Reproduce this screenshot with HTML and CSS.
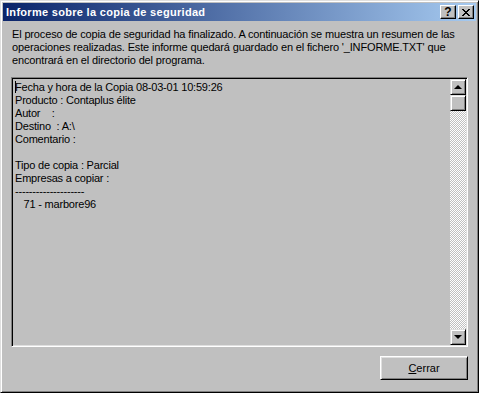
FILE: index.html
```html
<!DOCTYPE html>
<html lang="es">
	<head>
		<meta charset="UTF-8" />
		<meta name="viewport" content="width=device-width, initial-scale=1.0" />
		<title>Informe sobre la copia de seguridad</title>
		<link rel="stylesheet" href="styles.css">
	</head>
	<body>
		<div class="window">
			<div class="titlebar">
				<span class="title">Informe sobre la copia de seguridad</span>
				<div class="title-buttons">
					<span class="tbtn help">?</span>
					<span class="tbtn close">
						<svg width="8" height="7" viewBox="0 0 8 7">
							<path d="M0 0h2v1h-2zM6 0h2v1h-2zM1 1h2v1h-2zM5 1h2v1h-2zM2 2h4v1h-4zM3 3h2v1h-2zM2 4h4v1h-4zM1 5h2v1h-2zM5 5h2v1h-2zM0 6h2v1h-2zM6 6h2v1h-2z" fill="#000"/>
						</svg>
					</span>
				</div>
			</div>
			<div class="dialog-body">
				<p class="intro">El proceso de copia de seguridad ha finalizado. A continuación se muestra un resumen de las<br />operaciones realizadas. Este informe quedará guardado en el fichero '_INFORME.TXT' que<br />encontrará en el directorio del programa.</p>
				<div class="memo">
					<div class="memo-text">
						<div><span class="caret"></span>Fecha y hora de la Copia 08-03-01 10:59:26</div>
						<div>Producto : Contaplus élite</div>
						<div>Autor&nbsp;&nbsp;&nbsp;&nbsp;:</div>
						<div>Destino&nbsp;&nbsp;: A:\</div>
						<div>Comentario :</div>
						<div>&nbsp;</div>
						<div>Tipo de copia : Parcial</div>
						<div>Empresas a copiar :</div>
						<div>--------------------</div>
						<div>&nbsp;&nbsp;&nbsp;71 - marbore96</div>
					</div>
					<div class="scrollbar">
						<div class="sbtn"><span class="arrow-up"></span></div>
						<div class="thumb"></div>
						<div class="track"></div>
						<div class="sbtn"><span class="arrow-down"></span></div>
					</div>
				</div>
				<div class="actions">
					<button class="btn" type="button"><u>C</u>errar</button>
				</div>
			</div>
		</div>
	</body>
</html>
```

FILE: styles.css
```css
body {
	margin: 0;
	font-family: "Liberation Sans", Arial, sans-serif;
	font-size: 11px;
	background-color: #c0c0c0;
}

.window {
	box-sizing: border-box;
	width: 479px;
	height: 393px;
	padding: 2px;
	background-color: #c0c0c0;
	border: 1px solid;
	border-color: #dfdfdf #000 #000 #dfdfdf;
	box-shadow: inset 1px 1px #fff, inset -1px -1px #808080;
}

.titlebar {
	height: 18px;
	display: flex;
	align-items: center;
	justify-content: space-between;
	padding: 0 2px 0 3px;
	background: linear-gradient(to right, #0a246a, #a6caf0);
}

.title {
	color: #fff;
	font-weight: bold;
	font-size: 11px;
	letter-spacing: 0.3px;
}

.title-buttons {
	display: flex;
	gap: 2px;
}

.tbtn {
	box-sizing: border-box;
	width: 16px;
	height: 14px;
	display: flex;
	align-items: center;
	justify-content: center;
	background-color: #c0c0c0;
	border: 1px solid;
	border-color: #fff #000 #000 #fff;
	box-shadow: inset -1px -1px #808080;
	font-weight: bold;
	font-size: 12px;
	color: #000;
}

.dialog-body {
	padding: 7px 8px 0 8px;
}

.intro {
	margin: 0 0 10px 1px;
	line-height: 13px;
	letter-spacing: -0.15px;
	white-space: nowrap;
	color: #000;
}

.memo {
	box-sizing: border-box;
	height: 270px;
	display: flex;
	border: 1px solid;
	border-color: #808080 #fff #fff #808080;
	box-shadow: inset 1px 1px #000, inset -1px -1px #dfdfdf;
	padding: 1px;
}

.memo-text {
	flex: 1;
	padding: 2px 2px;
	line-height: 13px;
	letter-spacing: -0.2px;
	white-space: nowrap;
	color: #000;
}

.caret {
	display: inline-block;
	width: 1px;
	height: 12px;
	margin-right: -1px;
	vertical-align: -2px;
	background-color: #000;
}

.scrollbar {
	width: 16px;
	display: flex;
	flex-direction: column;
}

.sbtn,
.thumb {
	box-sizing: border-box;
	height: 16px;
	display: flex;
	align-items: center;
	justify-content: center;
	background-color: #c0c0c0;
	border: 1px solid;
	border-color: #dfdfdf #000 #000 #dfdfdf;
	box-shadow: inset 1px 1px #fff, inset -1px -1px #808080;
}

.track {
	flex: 1;
	background: repeating-conic-gradient(#fff 0 25%, #c0c0c0 0 50%) 0 0 / 2px 2px;
}

.arrow-up,
.arrow-down {
	width: 0;
	height: 0;
	border-left: 4px solid transparent;
	border-right: 4px solid transparent;
}

.arrow-up {
	border-bottom: 4px solid #000;
	margin-top: -1px;
}

.arrow-down {
	border-top: 4px solid #000;
}

.actions {
	display: flex;
	justify-content: flex-end;
	margin-top: 9px;
}

.btn {
	width: 88px;
	height: 24px;
	padding: 0;
	font-family: "Liberation Sans", Arial, sans-serif;
	font-size: 11px;
	color: #000;
	background-color: #c0c0c0;
	border: 1px solid;
	border-color: #fff #000 #000 #fff;
	box-shadow: inset 1px 1px #dfdfdf, inset -1px -1px #808080;
	border-radius: 0;
}
```
